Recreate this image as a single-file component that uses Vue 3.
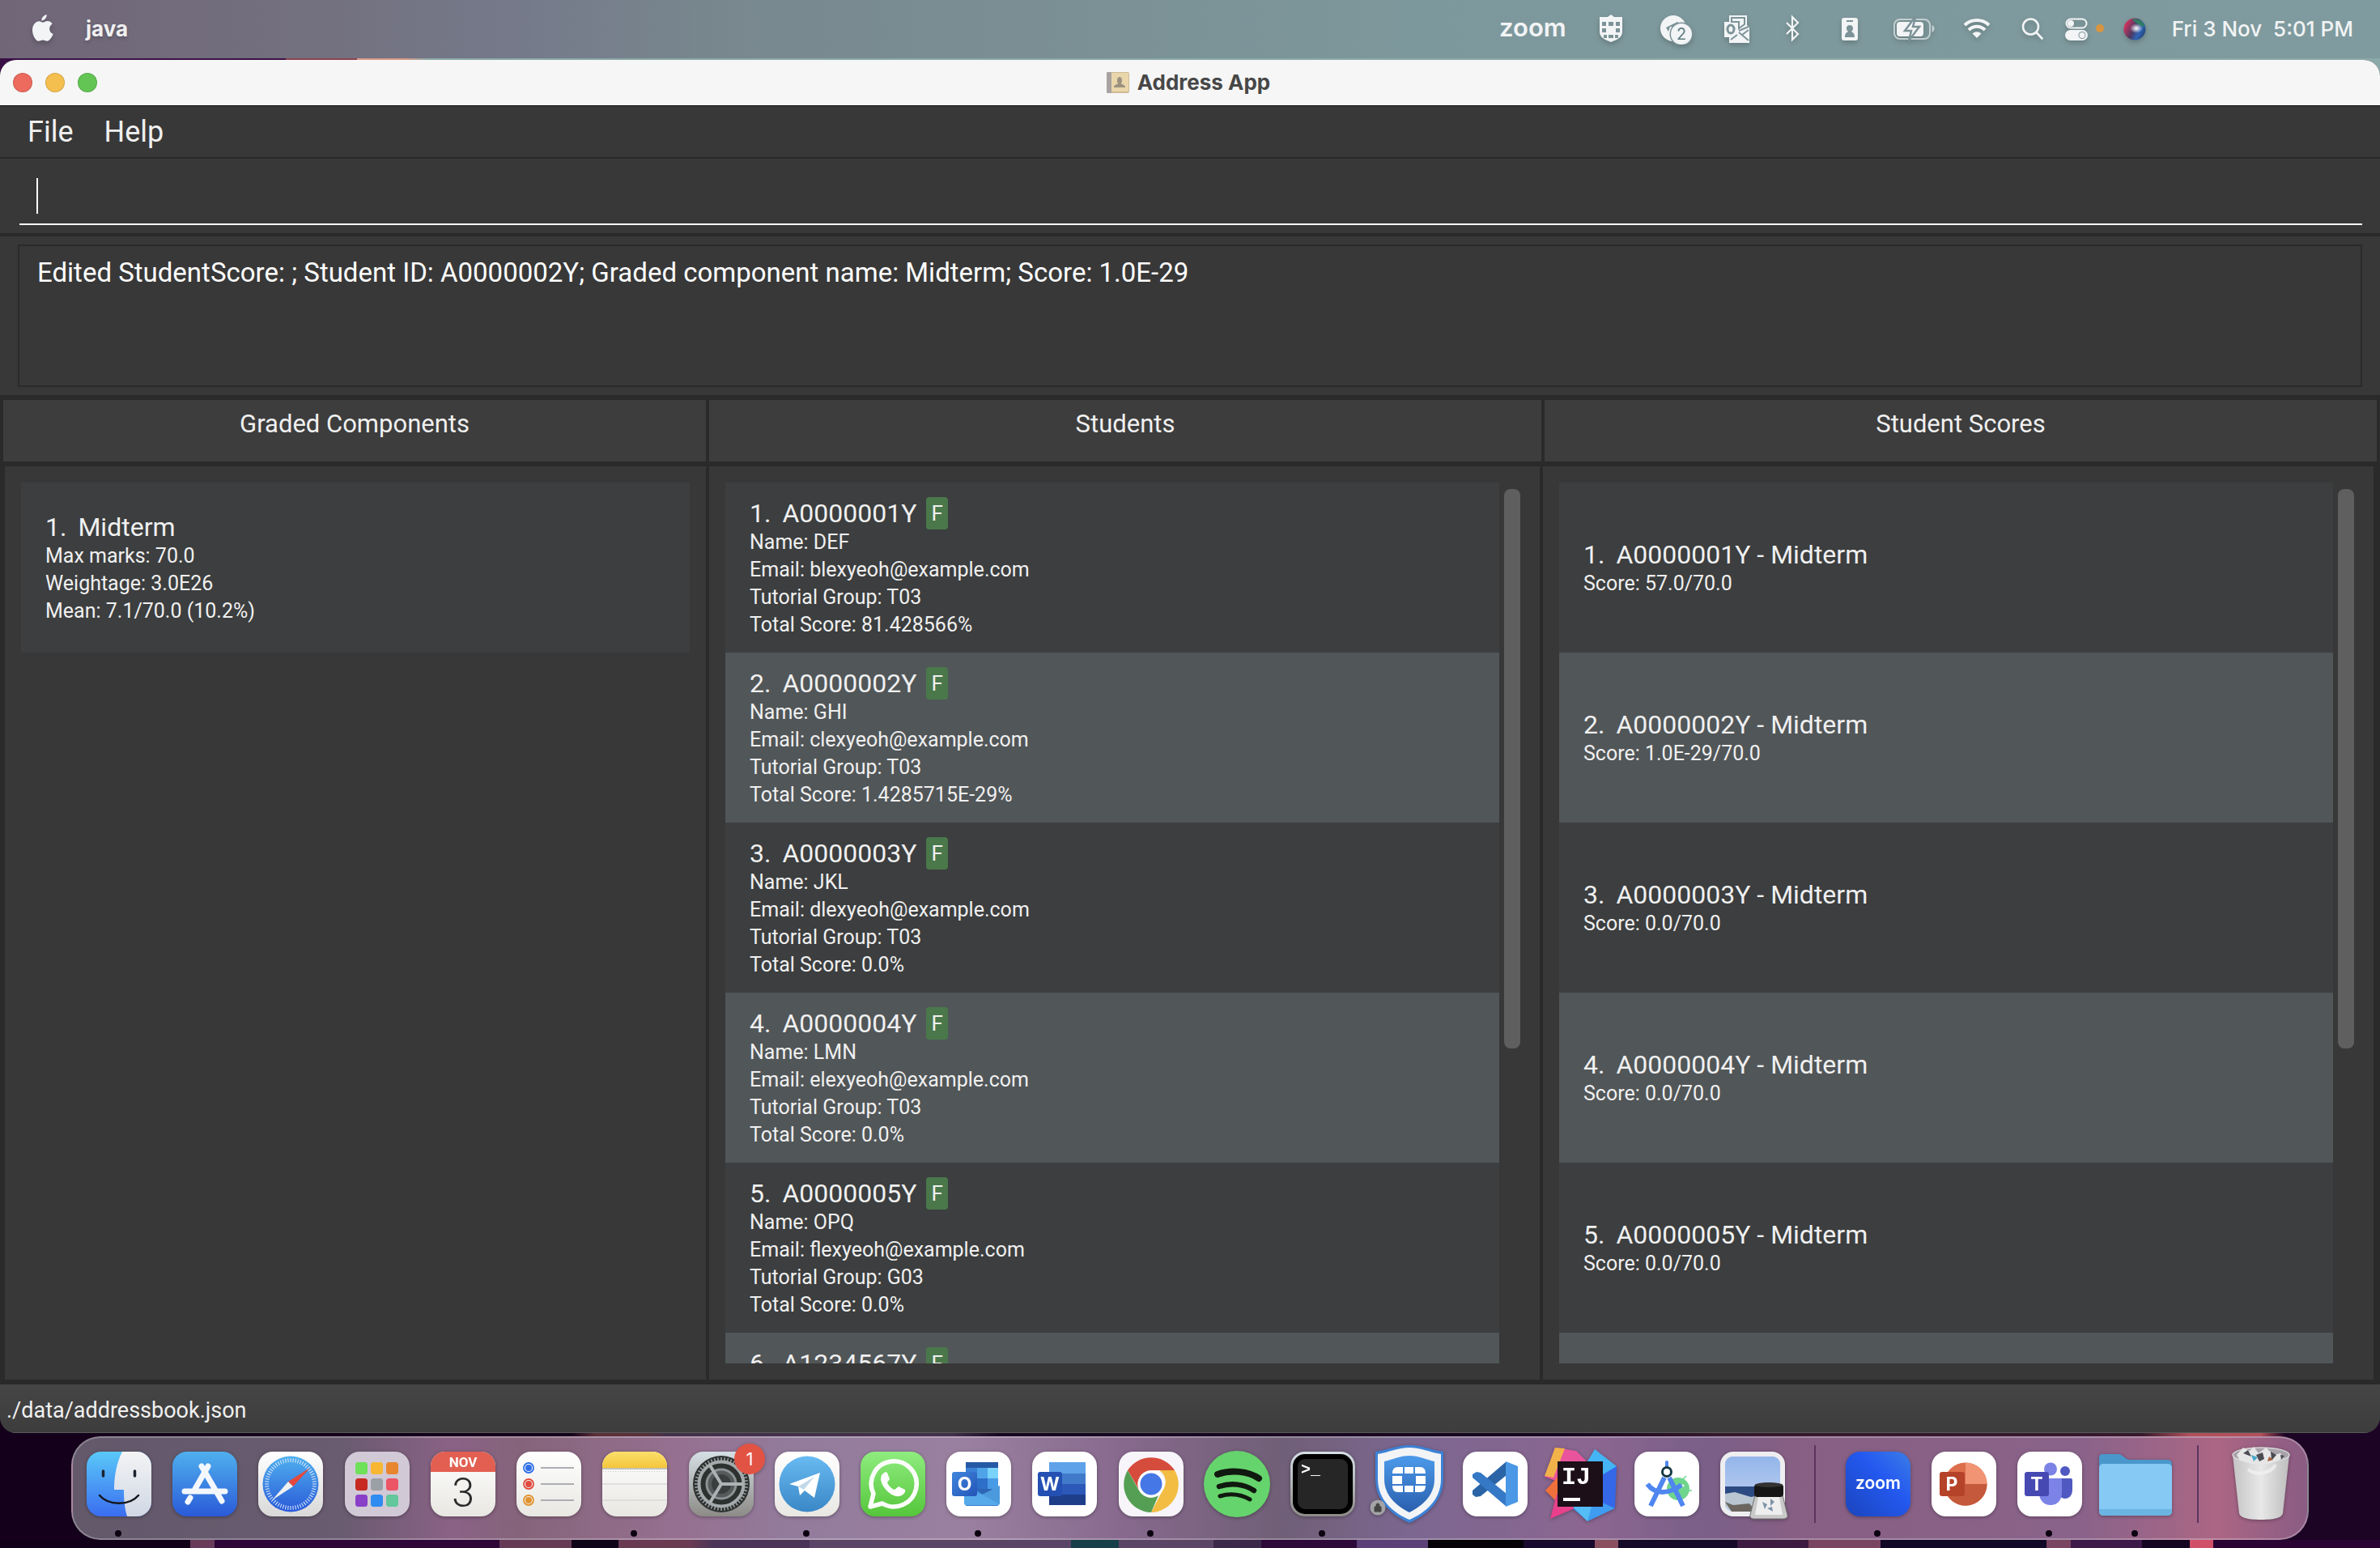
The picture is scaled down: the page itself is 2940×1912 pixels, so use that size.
<script setup>
const menus = ['File', 'Help']

const components = [
  { title: 'Midterm', lines: ['Max marks: 70.0', 'Weightage: 3.0E26', 'Mean: 7.1/70.0 (10.2%)'] },
]

const student = (id, name, email, group, score) => ({
  title: id,
  tag: 'F',
  lines: [`Name: ${name}`, `Email: ${email}@example.com`, `Tutorial Group: ${group}`, `Total Score: ${score}%`],
})
const students = [
  student('A0000001Y', 'DEF', 'blexyeoh', 'T03', '81.428566'),
  student('A0000002Y', 'GHI', 'clexyeoh', 'T03', '1.4285715E-29'),
  student('A0000003Y', 'JKL', 'dlexyeoh', 'T03', '0.0'),
  student('A0000004Y', 'LMN', 'elexyeoh', 'T03', '0.0'),
  student('A0000005Y', 'OPQ', 'flexyeoh', 'G03', '0.0'),
  student('A1234567Y', 'RST', 'glexyeoh', 'G03', '0.0'),
]

const scores = ['57.0', '1.0E-29', '0.0', '0.0', '0.0', '0.0'].map((score, i) => ({
  title: `${students[i].title} - Midterm`,
  lines: [`Score: ${score}/70.0`],
}))

const panels = [
  { name: 'Graded Components', items: components, scroll: false },
  { name: 'Students', items: students, scroll: true },
  { name: 'Student Scores', items: scores, scroll: true },
]

const launchpad = ['#6fe05a', '#f7b733', '#e8862f', '#c62a20', '#9aa0a6', '#ec5565', '#8a3fc9', '#2f8cf0', '#62c79b']
const ticks = Array.from({ length: 60 }, (_, i) => i * 6)
const teeth = Array.from({ length: 48 }, (_, i) => i * 7.5)
</script>

<template>
  <div class="desktop">
    <header class="menubar">
      <svg class="apple" viewBox="0 0 28 36" aria-label="Apple">
        <path d="M18.700 1c.3 3.600-2.700 7.400-6.300 7.600C12 5.200 15.200 1.400 18.700 1zM13.900 10.800c1.600 0 3.200-1.700 5.800-1.700 2.300 0 4.600 1.200 6 3.300-5.200 3-4.400 10.400 1 12.600-1.300 3.500-4.300 8.600-7.300 8.700-2.100 0-2.700-1.300-5.400-1.300s-3.500 1.300-5.500 1.300C5 33.700 1 26.400 1 20.200c0-7 4.300-11 8.300-11 2.200 0 3.300 1.600 4.600 1.600z" />
      </svg>
      <strong class="app-name">java</strong>
      <span class="spacer"></span>
      <span class="zoom-word">zoom</span>
      <svg class="w70" viewBox="0 0 70 40">
        <path d="M35 3l4 3h10v18c0 7-6 10-14 13-8-3-14-6-14-13V6h10z" />
        <path d="M24 12h5v5h-5zM32 12h6v5h-6zM41 12h5v5h-5zM24 20h5v5h-5zM41 20h5v5h-5zM26 28h4v4h-4zM32 28h6v4h-6zM40 28h4v4h-4z" fill="#7c9398" />
      </svg>
      <svg class="w52" viewBox="0 0 52 40">
        <circle cx="22" cy="20" r="16" />
        <path d="M13 19l14-7 3 2-4 5-8-1-2 6z" fill="#7c9398" />
        <circle cx="32" cy="27" r="14.500" fill="#7c9398" />
        <circle cx="32" cy="27" r="13" />
        <text x="32" y="34" class="cloud-count">2</text>
      </svg>
      <svg class="w56" viewBox="0 0 56 40">
        <path d="M19 4h22v12l3 3v19H19v-7h-6V12h6z" />
        <path d="M22 7h16v8l-7 5v-8h-9zM31 23l12-5M31 25l12 10M43 22l-8 6" fill="none" stroke="#7c9398" stroke-width="2" />
        <path d="M21 34l8-6" stroke="#7c9398" stroke-width="2" />
        <ellipse cx="21" cy="21" rx="4" ry="5" fill="none" stroke="#7c9398" stroke-width="3" />
      </svg>
      <svg class="w42" viewBox="0 0 42 40">
        <path d="M14 13l14 14-7 7V6l7 7-14 14" fill="none" stroke="#f2f4f5" stroke-width="2.200" />
      </svg>
      <svg class="w60" viewBox="0 0 60 40">
        <rect x="20" y="7" width="20" height="28" rx="3" />
        <path d="M26 10h8v2h-8zM24 31c0-6 3-6 4-7-3-2-3-8 2-8s5 6 2 8c1 1 4 1 4 7z" fill="#7c9398" />
      </svg>
      <svg class="w60" viewBox="0 0 60 40">
        <rect x="5" y="9" width="44" height="24" rx="7" fill="none" stroke="#c3cfd1" stroke-width="2" />
        <path d="M51.500 16c4 1 4 8 0 9z" fill="#c3cfd1" />
        <rect x="8" y="12" width="33" height="18" rx="4" />
        <path d="M30 7L18 23h8l-3 12 13-17h-8l3-11z" stroke="#7c9398" stroke-width="2.500" />
      </svg>
      <svg class="w54" viewBox="0 0 54 40">
        <path d="M12 16a22 22 0 0 1 30 0M17 22a14 14 0 0 1 20 0" fill="none" stroke="#f2f4f5" stroke-width="4" />
        <path d="M21.500 26.500a8 8 0 0 1 11 0L27 32z" />
      </svg>
      <svg class="w42" viewBox="0 0 42 40">
        <g fill="none" stroke="#f2f4f5" stroke-width="2.600" stroke-linecap="round">
          <circle cx="19.500" cy="18" r="9.500" />
          <path d="M26.500 25l7 7.500" />
        </g>
      </svg>
      <span class="control">
        <svg class="w28" viewBox="0 0 28 40">
          <rect x="1.500" y="8.500" width="25" height="11" rx="5.500" fill="none" stroke="#f2f4f5" stroke-width="2" />
          <circle cx="7" cy="14" r="4" />
          <rect x="0" y="22" width="28" height="13" rx="6.500" />
          <circle cx="21" cy="28.500" r="4.500" fill="#7c9398" />
          <circle cx="21" cy="28.500" r="3.500" />
        </svg>
        <i class="mic-dot"></i>
      </span>
      <svg class="w36" viewBox="0 0 36 40">
        <defs>
          <linearGradient id="siri" x1="0" y1="0.300" x2="1" y2="0.800">
            <stop offset="0" stop-color="#e0315b" /><stop offset="0.450" stop-color="#4c3a63" />
            <stop offset="0.700" stop-color="#2f64b8" /><stop offset="1" stop-color="#23406c" />
          </linearGradient>
          <radialGradient id="glow"><stop offset="0" stop-color="#fff" /><stop offset="1" stop-color="#fff" stop-opacity="0" /></radialGradient>
        </defs>
        <circle cx="18" cy="21" r="13.500" fill="url(#siri)" />
        <path d="M15 9c8-2 15 4 15 9-6-1-10-4-15-9z" fill="#2f7d63" />
        <ellipse cx="20" cy="20" rx="8" ry="6" fill="url(#glow)" />
      </svg>
      <time class="clock">Fri 3 Nov&nbsp; 5:01 PM</time>
    </header>

    <main class="window">
      <div class="titlebar">
        <div class="lights">
          <button class="light close" aria-label="Close"></button>
          <button class="light minimise" aria-label="Minimise"></button>
          <button class="light full" aria-label="Full screen"></button>
        </div>
        <h1 class="title">
          <svg class="book" viewBox="0 0 28 28">
            <rect x="0" y="1" width="28" height="26" rx="2" fill="#cdbb94" />
            <rect x="0" y="1" width="6" height="26" rx="1" fill="#a8a2a0" />
            <rect x="6" y="2" width="21" height="23" fill="#ead6ab" />
            <path d="M9 20c0-4 4-3 5-5-2-3-1-8 2-8s4 5 2 8c1 2 5 1 5 5z" fill="#9c9280" />
          </svg>
          Address App
        </h1>
      </div>

      <nav class="menus">
        <button v-for="menu in menus" :key="menu" class="menu">{{ menu }}</button>
      </nav>

      <div class="command">
        <input class="command-field" type="text" aria-label="Command" />
        <i class="caret"></i>
      </div>

      <div class="result">
        <output class="result-text">Edited StudentScore: ; Student ID: A0000002Y; Graded component name: Midterm; Score: 1.0E-29</output>
      </div>

      <div class="heads">
        <h2 v-for="panel in panels" :key="panel.name" class="head">{{ panel.name }}</h2>
      </div>

      <div class="panels">
        <section v-for="panel in panels" :key="panel.name" class="panel" :class="{ scrolls: panel.scroll }" :aria-label="panel.name">
          <ul class="list">
            <li v-for="(item, i) in panel.items" :key="item.title" class="cell">
              <div class="cell-title">
                <span class="index">{{ i + 1 }}.</span>
                <span>{{ item.title }}</span>
                <span v-if="item.tag" class="tag">{{ item.tag }}</span>
              </div>
              <p v-for="line in item.lines" :key="line" class="line">{{ line }}</p>
            </li>
          </ul>
          <div v-if="panel.scroll" class="track"><div class="thumb"></div></div>
        </section>
      </div>

      <footer class="status">./data/addressbook.json</footer>
    </main>

    <nav class="dock" aria-label="Dock">
      <svg width="0" height="0" class="defs">
        <defs>
          <linearGradient id="gBlue" x2="0" y2="1"><stop offset="0" stop-color="#5ac8f8" /><stop offset="1" stop-color="#3a6df0" /></linearGradient>
          <linearGradient id="gStore" x2="0" y2="1"><stop offset="0" stop-color="#4fb0ee" /><stop offset="1" stop-color="#2a5ad8" /></linearGradient>
          <linearGradient id="gPale" x2="0" y2="1"><stop offset="0" stop-color="#f3f3f5" /><stop offset="1" stop-color="#d0d8e4" /></linearGradient>
          <linearGradient id="gWhite" x2="0" y2="1"><stop offset="0" stop-color="#fff" /><stop offset="1" stop-color="#d8d8d8" /></linearGradient>
          <linearGradient id="gPaper" x2="0" y2="1"><stop offset="0" stop-color="#fff" /><stop offset="1" stop-color="#e8e7e2" /></linearGradient>
          <linearGradient id="gYellow" x2="0" y2="1"><stop offset="0" stop-color="#fbdf6b" /><stop offset="1" stop-color="#f5c63c" /></linearGradient>
          <linearGradient id="gGrey" x2="0" y2="1"><stop offset="0" stop-color="#d5dfe5" /><stop offset="1" stop-color="#8d8b87" /></linearGradient>
          <linearGradient id="gTele" x2="0" y2="1"><stop offset="0" stop-color="#68baf2" /><stop offset="1" stop-color="#3a87c6" /></linearGradient>
          <linearGradient id="gGreen" x2="0" y2="1"><stop offset="0" stop-color="#8fec7f" /><stop offset="1" stop-color="#55c63b" /></linearGradient>
          <linearGradient id="gShield" x2="0" y2="1"><stop offset="0" stop-color="#4c9aea" /><stop offset="1" stop-color="#2a5fae" /></linearGradient>
          <linearGradient id="gZoom" x1="1" x2="0" y2="1"><stop offset="0" stop-color="#3c7de6" /><stop offset="0.400" stop-color="#2459f0" /><stop offset="1" stop-color="#1b45bd" /></linearGradient>
          <linearGradient id="gTile" x2="1" y2="1"><stop offset="0" stop-color="#3f86dc" /><stop offset="1" stop-color="#2455b8" /></linearGradient>
          <linearGradient id="gSky" x2="0" y2="1"><stop offset="0" stop-color="#93b5ea" /><stop offset="1" stop-color="#c3d5f2" /></linearGradient>
          <linearGradient id="gBin" x2="1" y2="0"><stop offset="0" stop-color="#c4c4c4" /><stop offset="0.500" stop-color="#e8e8e8" /><stop offset="1" stop-color="#bdbdbd" /></linearGradient>
        </defs>
      </svg>

      <a href="#" class="app running" aria-label="Finder"><svg viewBox="0 0 80 80">
        <rect width="80" height="80" rx="18" fill="url(#gBlue)" />
        <path d="M44 0h18a18 18 0 0 1 18 18v44a18 18 0 0 1-18 18H50c-3-10-4-20-4-33H34C34 30 37 14 44 0z" fill="url(#gPale)" />
        <path d="M20.500 24v6M59.500 24v6" stroke="#1d2430" stroke-width="3.500" stroke-linecap="round" />
        <path d="M16 54c11 13 37 13 48 0" fill="none" stroke="#15181d" stroke-width="2.500" stroke-linecap="round" />
      </svg></a>
      <a href="#" class="app" aria-label="App Store"><svg viewBox="0 0 80 80">
        <rect width="80" height="80" rx="18" fill="url(#gStore)" />
        <path d="M44 18L28 46M36 18l25 43M15 49h50M22 57l-3 5" stroke="#f4f8fd" stroke-width="7" stroke-linecap="round" />
      </svg></a>
      <a href="#" class="app" aria-label="Safari"><svg viewBox="0 0 80 80">
        <rect width="80" height="80" rx="18" fill="url(#gWhite)" />
        <circle cx="40" cy="40" r="34.500" fill="url(#gStore)" />
        <path v-for="t in ticks" :key="t" :transform="`rotate(${t} 40 40)`" d="M40 8v5" stroke="#dcebfb" stroke-width="1" />
        <path d="M64 20L37 37l6 6z" fill="#e5483b" /><path d="M17 60l20-23 6 6z" fill="#eef0f2" />
      </svg></a>
      <a href="#" class="app" aria-label="Launchpad"><svg viewBox="0 0 80 80">
        <rect width="80" height="80" rx="18" fill="#d1c9d6" />
        <rect v-for="(c, i) in launchpad" :key="c" :x="13 + (i % 3) * 19" :y="13 + Math.floor(i / 3) * 20" width="15" height="15" rx="3.500" :fill="c" />
      </svg></a>
      <a href="#" class="app" aria-label="Calendar"><svg viewBox="0 0 80 80">
        <rect width="80" height="80" rx="18" fill="url(#gPaper)" />
        <path d="M0 25v-7A18 18 0 0 1 18 0h44a18 18 0 0 1 18 18v7z" fill="#e25f52" />
        <text x="40" y="19" class="t month">NOV</text>
        <text x="40" y="68" class="t day">3</text>
      </svg></a>
      <a href="#" class="app" aria-label="Reminders"><svg viewBox="0 0 80 80">
        <rect width="80" height="80" rx="18" fill="url(#gPaper)" />
        <g fill="none" stroke-width="1.800">
          <circle cx="15" cy="20" r="6" stroke="#2f6fe8" /><circle cx="15" cy="40" r="6" stroke="#e04a3e" /><circle cx="15" cy="60" r="6" stroke="#e2932f" />
          <path d="M30 20h41M30 40h41M30 60h41" stroke="#adaeb1" />
        </g>
        <circle cx="15" cy="20" r="4" fill="#2f6fe8" /><circle cx="15" cy="40" r="4" fill="#e04a3e" /><circle cx="15" cy="60" r="4" fill="#e2932f" />
      </svg></a>
      <a href="#" class="app running" aria-label="Notes"><svg viewBox="0 0 80 80">
        <rect width="80" height="80" rx="18" fill="url(#gPaper)" />
        <path d="M0 20v-2A18 18 0 0 1 18 0h44a18 18 0 0 1 18 18v2z" fill="url(#gYellow)" />
        <path d="M0 21h80" stroke="#b3aea0" stroke-width="1.500" /><path d="M1 24.500h78" stroke="#c9c9c5" stroke-dasharray="1 2" />
        <path d="M0 40h80M0 60h80" stroke="#d9d9d7" stroke-width="1.500" />
      </svg></a>
      <a href="#" class="app" aria-label="System Preferences"><svg viewBox="0 0 80 80">
        <rect width="80" height="80" rx="18" fill="url(#gGrey)" />
        <circle cx="40" cy="40" r="35" fill="#2d3130" />
        <path v-for="t in teeth" :key="t" :transform="`rotate(${t} 40 40)`" d="M40 7v4" stroke="#9ea3a5" stroke-width="1.500" />
        <circle cx="40" cy="40" r="27.500" fill="none" stroke="#a4a9ab" stroke-width="4" />
        <circle cx="40" cy="40" r="18" fill="#565a5a" stroke="#8d9294" stroke-width="3" />
        <circle cx="40" cy="40" r="12" fill="#3a3e3e" />
        <path d="M40 40h27M40 40L26 17M40 40L26 63" stroke="#adb2b4" stroke-width="4" />
        <circle cx="75" cy="9" r="19" fill="#e25344" />
        <text x="75" y="17" class="t badge">1</text>
      </svg></a>
      <a href="#" class="app running" aria-label="Telegram"><svg viewBox="0 0 80 80">
        <rect width="80" height="80" rx="18" fill="url(#gPaper)" /><circle cx="40" cy="40" r="34.500" fill="url(#gTele)" />
        <path d="M18 40l38-14-7 31-12-9-6 6-2-11z" fill="#fff" /><path d="M29 43l20-12-13 16z" fill="#c3d9ea" />
      </svg></a>
      <a href="#" class="app" aria-label="WhatsApp"><svg viewBox="0 0 80 80">
        <rect width="80" height="80" rx="18" fill="url(#gGreen)" />
        <path d="M12 68l4-16a28 28 0 1 1 11 12z" fill="none" stroke="#fbfdfa" stroke-width="5.500" stroke-linejoin="round" />
        <path d="M31 25c-8 3-7 12-2 19s12 12 19 11c5-1 8-5 7-8l-8-4-5 4c-4-1-8-6-9-9l3-4-3-8z" fill="#fff" />
      </svg></a>
      <a href="#" class="app running" aria-label="Outlook"><svg viewBox="0 0 80 80">
        <rect width="80" height="80" rx="18" fill="#fff" />
        <path d="M24 13h40v54H24z" fill="#3a80d4" /><path d="M24 13h40v7H24z" fill="#2558a5" /><path d="M38 20h13v13H38z" fill="#4fa4e8" /><path d="M51 20h13v13H51z" fill="#79d3fa" />
        <path d="M38 33h13v13H38z" fill="#2e6fc9" /><path d="M51 33h13v13H51z" fill="#4a9be5" /><path d="M22 42l22 11 22-11v22a2 2 0 0 1-2 2H24a2 2 0 0 1-2-2z" fill="#57aae9" /><path d="M36 46h22L47 54z" fill="#2c65b4" /><path d="M44 53l22 12V42z" fill="#4c9ade" />
        <rect x="7" y="25" width="31" height="30" rx="3" fill="url(#gTile)" /><text x="22.500" y="48" class="t tile">O</text>
      </svg></a>
      <a href="#" class="app" aria-label="Word"><svg viewBox="0 0 80 80">
        <rect width="80" height="80" rx="18" fill="#fff" />
        <path d="M21 13h45v14H21z" fill="#5fa2ea" /><path d="M21 27h45v13H21z" fill="#427acb" /><path d="M21 40h45v13H21z" fill="#2c59b8" /><path d="M21 53h45v13H21z" fill="#1f3e8a" />
        <rect x="7" y="25" width="30" height="30" rx="3" fill="#2350b2" /><text x="22" y="48" class="t tile">W</text>
      </svg></a>
      <a href="#" class="app running" aria-label="Chrome"><svg viewBox="0 0 80 80">
        <rect width="80" height="80" rx="18" fill="#f7f5f9" />
        <path d="M11 23a34.500 34.500 0 0 1 58 0H40a17 17 0 0 0-15 24z" fill="#d64c3c" />
        <path d="M69 23a34.500 34.500 0 0 1-29 52l14-27a17 17 0 0 0-4-25z" fill="#f2bd42" />
        <path d="M11 23l14 25a17 17 0 0 0 24 6L40 75A34.500 34.500 0 0 1 11 23z" fill="#559f54" />
        <circle cx="40" cy="40" r="16.500" fill="#fff" /><circle cx="40" cy="40" r="13.500" fill="#4577e6" />
      </svg></a>
      <a href="#" class="app" aria-label="Spotify"><svg viewBox="0 0 80 80">
        <circle cx="40" cy="40" r="41" fill="#66d46d" />
        <g fill="none" stroke="#10190f" stroke-linecap="round"><path d="M16 28c17-6 38-4 51 5" stroke-width="8" /><path d="M18 43c15-5 31-3 43 5" stroke-width="6.500" /><path d="M19 55c13-4 26-2 37 4" stroke-width="5" /></g>
      </svg></a>
      <a href="#" class="app running" aria-label="Terminal"><svg viewBox="0 0 80 80">
        <rect width="80" height="80" rx="18" fill="url(#gGrey)" /><rect x="3" y="3" width="74" height="74" rx="15" fill="#000" /><rect x="9" y="9" width="62" height="62" rx="9" fill="#262626" />
        <text x="13" y="28" class="prompt">&gt;_</text>
      </svg></a>
      <a href="#" class="app" aria-label="FortiClient"><svg viewBox="0 0 80 80">
        <path d="M-1 0C14-2 26-8 41-8s27 6 42 8v34c0 28-22 45-42 54C21 79-1 62-1 34z" fill="#3d82d6" />
        <path d="M2 3c13-2 25-8 39-8s26 6 39 8v31c0 26-20 42-39 50C22 76 2 60 2 34z" fill="#f2f4f6" />
        <path d="M10 12C20 10 29 5 41 5s21 5 31 7v22c0 20-15 33-31 41-16-8-31-21-31-41z" fill="url(#gShield)" />
        <path d="M27 19h6v8H20c0-5 2-8 7-8zM35 19h11v8H35zM48 19h6c5 0 7 3 7 8H48zM20 30h12v10H20zM49 30h12v10H49zM20 42h13v8h-6c-5 0-7-3-7-8zM35 42h11v8H35zM48 42h13c0 5-2 8-7 8h-6z" fill="#fff" />
        <circle cx="2" cy="69" r="9.500" fill="#a3a3a6" /><path d="M-2 68h8v6h-8zM0 68v-2a2 2 0 0 1 4 0v2" fill="#444" stroke="#444" />
      </svg></a>
      <a href="#" class="app" aria-label="Visual Studio Code"><svg viewBox="0 0 80 80">
        <rect width="80" height="80" rx="18" fill="#fff" />
        <path d="M54 12L12 48v5l4 3 6-1 32-26z" fill="#2a64a6" /><path d="M54 68L12 32v-4l5-3 5 1 32 26z" fill="#3578c6" /><path d="M53 12l15 6v44l-15 6z" fill="#4a98e6" />
      </svg></a>
      <a href="#" class="app" aria-label="IntelliJ IDEA"><svg viewBox="0 0 80 80">
        <path d="M8-5l26 4 12 12-12 34L-5 31z" fill="#e9549c" /><path d="M8-5l12 1L6 32l-11-2z" fill="#f2b24a" /><path d="M-4 48l18-20 8 46z" fill="#f0703c" /><path d="M10 52l22 18L2 83z" fill="#e8408a" />
        <path d="M57-3l27 21-8 34-26-10-8-20z" fill="#44b4f4" /><path d="M64 30l20-12-2 52-22-6z" fill="#3568e8" /><path d="M82 70L48 86 30 70l34-8z" fill="#3f9cf0" /><path d="M30 68l24-4-6 22z" fill="#55bdf5" />
        <rect x="11" y="12" width="56" height="56" fill="#1c0f18" /><text x="16" y="40" class="ij">IJ</text><path d="M18 59h21" stroke="#fff" stroke-width="4" />
      </svg></a>
      <a href="#" class="app" aria-label="Android Studio"><svg viewBox="0 0 80 80">
        <rect width="80" height="80" rx="18" fill="#fff" />
        <circle cx="54" cy="46" r="14" fill="#6fd58c" /><path d="M60 34l4-4M67 48h4" stroke="#6fd58c" stroke-width="1.500" /><circle cx="60" cy="42" r="1.500" fill="#fff" />
        <g fill="none" stroke="#4f86f0"><path d="M40 13v8" stroke-width="4" stroke-linecap="round" /><path d="M37 32L20 67M43 32l17 35" stroke-width="6" /><path d="M16 40c10 14 28 12 42 1" stroke-width="6" /></g>
        <circle cx="40" cy="25" r="5.500" fill="#fff" stroke="#153a44" stroke-width="3" />
      </svg></a>
      <a href="#" class="app" aria-label="Preview"><svg viewBox="0 0 80 80">
        <rect width="80" height="80" rx="16" fill="#eeedf0" /><rect x="6" y="6" width="68" height="68" rx="9" fill="url(#gSky)" />
        <path d="M6 43h68v14H6z" fill="#2c4b82" /><path d="M6 52l12-2 20 6 20-4 16 3v14l-9 5H15l-9-7z" fill="#b9c6d2" /><path d="M6 62l10 4 20-2 8 10H14z" fill="#6b6660" />
        <path d="M43 54l-6 24c-1 4 3 5 5 5h36c3 0 6-2 5-5l-6-24z" fill="#c9c9c9" stroke="#6e6e6e" /><path d="M47 56l-4 22h34l-4-22z" fill="#eee" /><path d="M52 62l6 3-3 6zM62 58l5 4-5 5zM58 70l6-2 1 6z" fill="#7c93a8" />
        <rect x="42" y="40" width="36" height="16" rx="4" fill="#161616" /><ellipse cx="60" cy="41" rx="17" ry="3" fill="#333" />
      </svg></a>
      <i class="divider"></i>
      <a href="#" class="app running" aria-label="Zoom"><svg viewBox="0 0 80 80">
        <rect width="80" height="80" rx="18" fill="url(#gZoom)" /><text x="40" y="46" class="t brand">zoom</text>
      </svg></a>
      <a href="#" class="app" aria-label="PowerPoint"><svg viewBox="0 0 80 80">
        <rect width="80" height="80" rx="18" fill="#fff" />
        <circle cx="42" cy="40" r="26.500" fill="#dc6e4c" /><path d="M42 13.500A26.500 26.500 0 0 1 68.500 40H42z" fill="#f09474" /><path d="M68.500 40A26.500 26.500 0 0 1 20 55l22-15z" fill="#c4593b" />
        <rect x="10" y="25" width="31" height="30" rx="3" fill="#b5432a" /><text x="25" y="48" class="t tile">P</text>
      </svg></a>
      <a href="#" class="app running" aria-label="Teams"><svg viewBox="0 0 80 80">
        <rect width="80" height="80" rx="18" fill="#fff" />
        <circle cx="59" cy="24" r="6" fill="#5059c2" /><path d="M50 33h16a2 2 0 0 1 2 2v12c0 7-4 11-9 11s-9-4-9-11z" fill="#5059c2" />
        <circle cx="41" cy="21.500" r="8" fill="#7b83e6" /><path d="M27 33h26a2 2 0 0 1 2 2v16c0 9-6 15-14 15s-14-6-14-15z" fill="#7b83e6" />
        <rect x="9" y="25" width="30" height="30" rx="3" fill="#4749b3" /><text x="24" y="48" class="t tile">T</text>
      </svg></a>
      <a href="#" class="app running" aria-label="Folder"><svg viewBox="0 0 80 80">
        <path d="M-5 8c0-4 2-5 5-5h18c7 0 8 7 16 7h46c4 0 5 3 5 6v14H-5z" fill="#4a97cc" />
        <rect x="-5" y="15" width="90" height="64" rx="5" fill="#86c9f5" /><path d="M-5 71h90v3a5 5 0 0 1-5 5H0a5 5 0 0 1-5-5z" fill="#6bb4e2" />
      </svg></a>
      <i class="divider"></i>
      <a href="#" class="app" aria-label="Bin"><svg viewBox="0 0 80 80">
        <path d="M5 4l8 72c1 5 8 8 27 8s26-3 27-8l8-72z" fill="url(#gBin)" />
        <ellipse cx="40" cy="4" rx="35" ry="9" fill="#a9a3ab" stroke="#d8d8d8" stroke-width="1.500" />
        <path d="M10 4l8-9 8 4 5-5 6 8 9-7 10 9 8-2 4 6-14 6-12 2-14-1-14-4z" fill="#e6e6e6" /><path d="M18 2l6-4 4 8zM34 4l8-3 2 8-6 3zM52 0l7 4-6 7zM64 4l5 1-4 5z" fill="#4b4b52" /><path d="M28 4l8 3-5 5z" fill="#49a7c9" /><path d="M50 6l5 4-7 2z" fill="#a8603c" />
        <path d="M24 22c14 10 30 2 34-6" fill="none" stroke="#f4f4f4" stroke-width="4" opacity=".7" />
      </svg></a>
    </nav>
  </div>
</template>

<style>
body {
  margin: 0;
  background: #1c0424;
}
</style>

<style scoped>
* {
  box-sizing: border-box;
}

.desktop {
  display: flex;
  flex-direction: column;
  height: 100vh;
  overflow: hidden;
  font-family: Inter, "Liberation Sans", sans-serif;
  color: #f0f0f0;
  background:
    linear-gradient(90deg, #3a0f45 0 12%, #8a4250 12% 15%, #d99a86 15% 17%, #8aa9a8 18%) top / 100% 110px no-repeat,
    linear-gradient(90deg, #120018 0 8%, #6a3a5a 8% 9%, #2e0638 9% 21%, #653a55 21% 24%, #0f0518 24% 26%, #6a3a52 26% 29%, #4a3558 30% 34%, #5a4566 34% 45%, #15404a 45% 47%, #5a4566 47% 51%, #3c2848 51% 53%, #2d0a3a 53% 57%, #5c4078 57% 60%, #050208 60% 64%, #180a2c 64% 67%, #8a5060 67% 68%, #150a28 68% 73%, #3d1a40 73% 76%, #7a4560 76% 79%, #120828 79% 86%, #7a4560 86% 87%, #3d1a4a 87% 90%, #150520 90% 92%, #d0506a 92% 93%, #2a0433 93%) bottom / 100% 10px no-repeat,
    linear-gradient(90deg, #14001a 0 24%, #5a3038 25% 27%, #42304a 28% 40%, #17061f 42% 66%, #35182c 72% 90%, #b0505a 92% 95%, #1c0424 96%);
}

.menubar {
  display: flex;
  align-items: center;
  gap: 20px;
  flex: none;
  height: 72px;
  padding: 0 33px 2px 39px;
  background: linear-gradient(90deg, #706678, #73707f 13%, #757a8a 22%, #78888e 31%, #7d989c 60%, #809b9f);
}

.menubar svg {
  height: 40px;
  flex: none;
  fill: #f2f4f5;
  filter: drop-shadow(0 3px 3px #0003);
}

.menubar .apple {
  width: 28px;
  height: 36px;
}

.w28 { width: 28px; }
.w36 { width: 36px; }
.w42 { width: 42px; }
.w52 { width: 52px; }
.w54 { width: 54px; }
.w56 { width: 56px; }
.w60 { width: 60px; }
.w70 { width: 70px; }

.app-name {
  margin-left: 19px;
  font-size: 26px;
  text-shadow: 0 3px 4px #0003;
}

.spacer {
  flex: 1;
}

.zoom-word {
  font-size: 31px;
  font-weight: 600;
  line-height: 32px;
  padding-bottom: 3px;
  color: #f2f4f5;
}

.cloud-count {
  font-size: 20px;
  text-anchor: middle;
  fill: #5f7a80;
}

.control {
  display: flex;
  align-items: center;
  gap: 10px;
}

.mic-dot {
  width: 10px;
  height: 10px;
  border-radius: 50%;
  background: #d9953f;
}

.clock {
  padding-left: 8px;
  font-size: 26px;
  font-weight: 500;
  white-space: nowrap;
  color: #f2f4f5;
}

.window {
  display: flex;
  flex-direction: column;
  flex: 1;
  min-height: 0;
  margin: 2px 0 4px;
  overflow: hidden;
  border-radius: 20px;
  background: #383838;
  font-family: Roboto, "Liberation Sans", sans-serif;
}

.titlebar {
  display: grid;
  grid-template-columns: 1fr auto 1fr;
  align-items: center;
  height: 56px;
  padding: 0 20px 0 16px;
  background: #f6f6f6;
}

.lights {
  display: flex;
  gap: 16px;
}

.light {
  width: 24px;
  height: 24px;
  padding: 0;
  border: 1px solid #0002;
  border-radius: 50%;
}

.close { background: #ed6a5e; }
.minimise { background: #f5bf4f; }
.full { background: #62c554; }

.title {
  display: flex;
  align-items: center;
  gap: 10px;
  margin: 0;
  font-family: Inter, "Liberation Sans", sans-serif;
  font-size: 26px;
  line-height: 32px;
  color: #474747;
}

.book {
  width: 28px;
  height: 28px;
}

.menus {
  display: flex;
  gap: 38px;
  height: 66px;
  padding: 0 34px;
  border-top: 1px solid #111;
  border-bottom: 2px solid #2a2a2a;
}

.menu {
  padding: 0;
  border: 0;
  background: none;
  font: inherit;
  font-size: 36px;
  color: inherit;
}

.command {
  position: relative;
  height: 96px;
  padding: 12px 22px 10px 24px;
  border-bottom: 4px solid #2a2a2a;
}

.command-field {
  width: 100%;
  height: 70px;
  padding: 0 22px;
  border: 0;
  border-bottom: 2px solid #fff;
  outline: 0;
  background: none;
  font: inherit;
  font-size: 33px;
  color: #fff;
}

.caret {
  position: absolute;
  top: 24px;
  left: 45px;
  width: 2px;
  height: 44px;
  background: #fff;
}

.result {
  height: 202px;
  padding: 10px 22px;
  border-bottom: 6px solid #2a2a2a;
}

.result-text {
  display: block;
  height: 176px;
  padding: 11px 22px;
  border: 2px solid #2a2a2a;
  font-size: 33px;
  line-height: 44px;
  color: #fff;
}

.heads {
  display: grid;
  grid-template-columns: 868fr 1028fr 1028fr;
  gap: 4px;
  padding: 0 4px 6px;
  background: #2a2a2a;
}

.head {
  height: 76px;
  margin: 0;
  padding-top: 10px;
  background: #3d3d3d;
  font-size: 31px;
  font-weight: 400;
  line-height: 40px;
  text-align: center;
}

.panels {
  display: grid;
  grid-template-columns: 866fr 1026fr 1026fr;
  grid-template-rows: minmax(0, 1fr);
  gap: 4px;
  flex: 1;
  min-height: 0;
  padding: 0 8px 6px 6px;
  background: #2a2a2a;
}

.panel {
  display: flex;
  gap: 6px;
  min-width: 0;
  padding: 20px;
  background: #383838;
}

.scrolls {
  padding-right: 24px;
}

.list {
  flex: 1;
  margin: 0;
  padding: 0;
  overflow: hidden;
  list-style: none;
}

.cell {
  display: flex;
  flex-direction: column;
  justify-content: center;
  height: 210px;
  padding: 0 30px;
  background: #3c3e3f;
}

.cell:nth-child(even) {
  background: #515658;
}

.cell-title {
  display: flex;
  align-items: center;
  height: 40px;
  padding-top: 2px;
  font-size: 32px;
  line-height: 40px;
}

.index {
  margin-right: 14px;
}

.tag {
  margin-left: 12px;
  padding: 0 6px;
  border-radius: 4px;
  background: #4a784b;
  font-size: 26px;
}

.line {
  margin: 0;
  font-size: 25px;
  line-height: 34px;
}

.track {
  width: 20px;
  padding-top: 8px;
}

.thumb {
  height: 64%;
  border-radius: 8px;
  background: #5f5f5f;
}

.status {
  height: 60px;
  padding: 0 8px;
  background: linear-gradient(#454545, #3d3d3d);
  border-bottom: 1px solid #5a5a5a;
  font-size: 27px;
  line-height: 64px;
}

.dock {
  display: flex;
  align-items: center;
  justify-content: space-between;
  flex: none;
  height: 128px;
  margin: 0 88px 10px;
  padding: 0 17px 10px;
  border: 2px solid #fff4;
  border-radius: 36px;
  background: linear-gradient(90deg, #63596b, #695b70 12%, #8a6285 17%, #85647b 20%, #967090 27%, #927b9b 32%, #9a80a0 40%, #87698d 47%, #705f77 54%, #7c6790 60%, #8b6690 68%, #7a5f88 73%, #875f84 77%, #8a638a 90%, #ab6684 96%, #8a5c84);
}

.defs {
  position: absolute;
}

.app {
  position: relative;
  width: 80px;
  height: 80px;
  flex: none;
}

.app svg {
  display: block;
  width: 80px;
  height: 80px;
  overflow: visible;
  filter: drop-shadow(0 1px 2px #0005);
}

.running::after {
  content: "";
  position: absolute;
  bottom: -25px;
  left: 35px;
  width: 8px;
  height: 8px;
  border-radius: 50%;
  background: #0c0210;
}

.divider {
  width: 2px;
  height: 96px;
  margin: 0 10px;
  background: #5b3560;
}

.t {
  text-anchor: middle;
  fill: #fff;
}

.month {
  font-family: Roboto, sans-serif;
  font-size: 17px;
  font-weight: 700;
}

.day {
  font-family: Roboto, sans-serif;
  font-size: 50px;
  font-weight: 300;
  fill: #2a2a2a;
}

.badge {
  font-size: 22px;
}

.tile {
  font-size: 23px;
  font-weight: 700;
}

.prompt {
  font: 700 20px "Liberation Mono", monospace;
  fill: #fff;
}

.ij {
  font: 700 30px "Liberation Mono", monospace;
  fill: #fff;
}

.brand {
  font-size: 21px;
  font-weight: 600;
}
</style>
